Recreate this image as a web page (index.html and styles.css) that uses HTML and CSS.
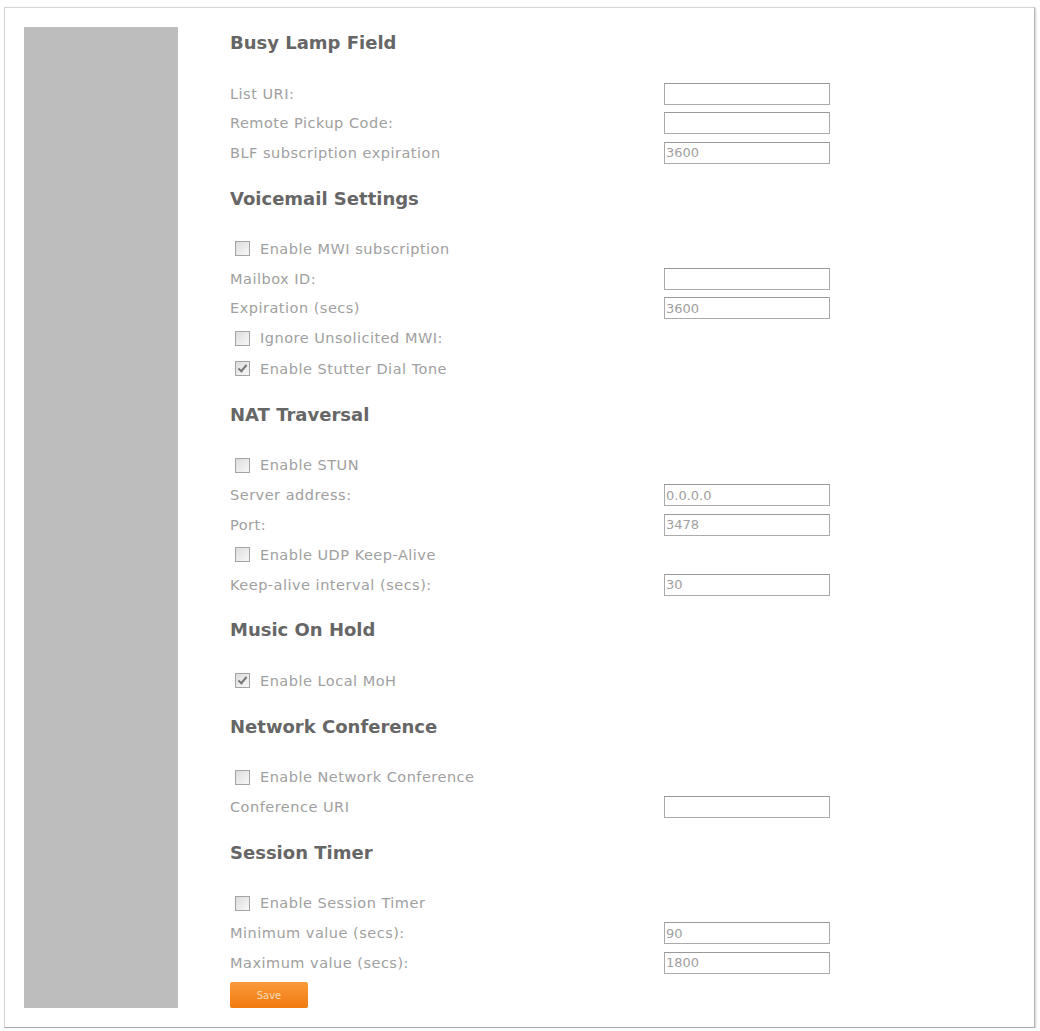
FILE: index.html
```html
<!DOCTYPE html>
<html lang="en">
<head>
    <meta charset="UTF-8">
    <title>Line Settings</title>
    <link rel="stylesheet" href="styles.css">
</head>
<body>
    <div class="frame">
        <div class="sidebar"></div>

        <form class="settings">
            <h2>Busy Lamp Field</h2>
            <div class="row"><label>List URI:</label><input type="text" value=""></div>
            <div class="row"><label>Remote Pickup Code:</label><input type="text" value=""></div>
            <div class="row"><label>BLF subscription expiration</label><input type="text" value="3600"></div>

            <h2>Voicemail Settings</h2>
            <div class="row check"><span class="box"></span>Enable MWI subscription</div>
            <div class="row"><label>Mailbox ID:</label><input type="text" value=""></div>
            <div class="row"><label>Expiration (secs)</label><input type="text" value="3600"></div>
            <div class="row check"><span class="box"></span>Ignore Unsolicited MWI:</div>
            <div class="row check"><span class="box on"></span>Enable Stutter Dial Tone</div>

            <h2>NAT Traversal</h2>
            <div class="row check"><span class="box"></span>Enable STUN</div>
            <div class="row"><label>Server address:</label><input type="text" value="0.0.0.0"></div>
            <div class="row"><label>Port:</label><input type="text" value="3478"></div>
            <div class="row check"><span class="box"></span>Enable UDP Keep-Alive</div>
            <div class="row"><label>Keep-alive interval (secs):</label><input type="text" value="30"></div>

            <h2>Music On Hold</h2>
            <div class="row check"><span class="box on"></span>Enable Local MoH</div>

            <h2>Network Conference</h2>
            <div class="row check"><span class="box"></span>Enable Network Conference</div>
            <div class="row"><label>Conference URI</label><input type="text" value=""></div>

            <h2>Session Timer</h2>
            <div class="row check"><span class="box"></span>Enable Session Timer</div>
            <div class="row"><label>Minimum value (secs):</label><input type="text" value="90"></div>
            <div class="row"><label>Maximum value (secs):</label><input type="text" value="1800"></div>

            <button type="button" class="save">Save</button>
        </form>
    </div>
</body>
</html>
```

FILE: styles.css
```css
body {
    margin: 0;
    background-color: #fff;
    font-family: "DejaVu Sans", Verdana, sans-serif;
}
.frame {
    display: flex;
    gap: 52px;
    width: 1031px;
    height: 1021px;
    box-sizing: border-box;
    margin: 7px 0 0 4px;
    padding: 19px;
    border: 1px solid #d4d4d4;
    border-right-color: #b8b8b8;
    border-bottom-color: #a8a8a8;
    box-shadow: 1px 1px 2px rgba(0, 0, 0, 0.2);
}
.sidebar {
    width: 154px;
    flex-shrink: 0;
    background-color: #bdbdbd;
}
.settings {
    display: flex;
    flex-direction: column;
    width: 600px;
}
.settings h2 {
    margin: 15px 0 19px;
    height: 32px;
    line-height: 32px;
    font-size: 18px;
    font-weight: bold;
    color: #666;
}
.settings h2:first-child {
    margin-top: 0;
    margin-bottom: 20px;
}
.row {
    display: grid;
    grid-template-columns: 434px 166px;
    align-items: center;
    height: 30px;
    font-size: 14.5px;
    letter-spacing: 0.5px;
    color: #a0a0a0;
}
.row.check {
    display: flex;
    height: 31px;
    padding-left: 5px;
    gap: 10px;
}
.row input {
    width: 166px;
    height: 22px;
    box-sizing: border-box;
    padding: 0 1px;
    border: 1px solid #aaa;
    border-top-color: #999;
    font-family: inherit;
    font-size: 13px;
    letter-spacing: 0;
    color: #a0a0a0;
    outline: none;
}
.box {
    width: 13px;
    height: 13px;
    border: 1px solid #a4a4a4;
    background: linear-gradient(135deg, #dcdcdc, #f8f8f8);
    position: relative;
}
.box.on::after {
    /* check mark */
    content: "";
    position: absolute;
    left: 4px;
    top: 1px;
    width: 3px;
    height: 7px;
    border: solid #777;
    border-width: 0 2px 2px 0;
    transform: rotate(40deg);
}
.save {
    align-self: flex-start;
    margin-top: 5px;
    width: 78px;
    height: 26px;
    border: none;
    border-radius: 2px;
    background: linear-gradient(#fb9a3a, #f07a10);
    color: #fcd9b4;
    font-family: inherit;
    font-size: 10px;
    cursor: pointer;
}
```
